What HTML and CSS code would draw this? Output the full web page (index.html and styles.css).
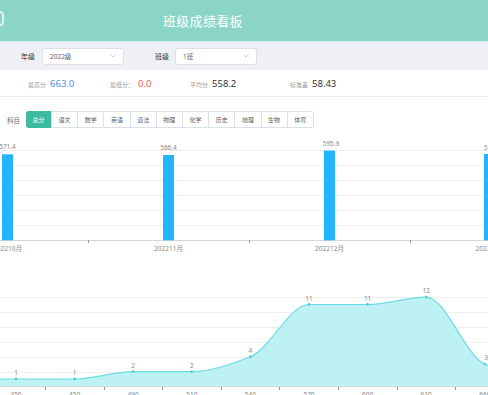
FILE: index.html
```html
<!DOCTYPE html>
<html lang="zh-CN">
<head>
    <meta charset="UTF-8">
    <meta name="viewport" content="width=device-width, initial-scale=1.0">
    <title>班级成绩看板</title>
    <link rel="stylesheet" href="styles.css">
</head>
<body>
    <!-- Header -->
    <div class="header">
        <span class="logo"></span>
        <h1 class="title">班级成绩看板</h1>
    </div>

    <!-- Filters -->
    <div class="filters">
        <label class="filter-label grade-label">年级</label>
        <div class="select">
            <span>2022级</span>
            <svg class="chevron" width="6" height="4" viewBox="0 0 6 4"><path d="M0.5 0.5 L3 3 L5.5 0.5" fill="none" stroke="#c0c4cc" stroke-width="0.8"/></svg>
        </div>
        <label class="filter-label class-label">班级</label>
        <div class="select">
            <span>1班</span>
            <svg class="chevron" width="6" height="4" viewBox="0 0 6 4"><path d="M0.5 0.5 L3 3 L5.5 0.5" fill="none" stroke="#c0c4cc" stroke-width="0.8"/></svg>
        </div>
    </div>

    <!-- Stats -->
    <div class="stats">
        <div class="stat stat-max"><span class="stat-label">最高分</span><span class="stat-value blue">663.0</span></div>
        <div class="stat stat-min"><span class="stat-label">最低分：</span><span class="stat-value red">0.0</span></div>
        <div class="stat stat-avg"><span class="stat-label">平均分</span><span class="stat-value">558.2</span></div>
        <div class="stat"><span class="stat-label">标准差</span><span class="stat-value">58.43</span></div>
    </div>

    <div class="card">
        <!-- Subject tabs -->
        <div class="tabs">
            <span class="tabs-label">科目</span>
            <div class="tab-group">
                <span class="tab active">总分</span>
                <span class="tab">语文</span>
                <span class="tab">数学</span>
                <span class="tab">英语</span>
                <span class="tab">道法</span>
                <span class="tab">物理</span>
                <span class="tab">化学</span>
                <span class="tab">历史</span>
                <span class="tab">地理</span>
                <span class="tab">生物</span>
                <span class="tab">体育</span>
            </div>
        </div>

        <!-- Monthly total bar chart -->
        <svg class="chart bar-chart" width="488" height="120" viewBox="0 0 488 120">
            <g stroke="#eeeeee" stroke-width="1">
                <line x1="0" y1="15.5" x2="488" y2="15.5"/>
                <line x1="0" y1="30.5" x2="488" y2="30.5"/>
                <line x1="0" y1="45.5" x2="488" y2="45.5"/>
                <line x1="0" y1="60.5" x2="488" y2="60.5"/>
                <line x1="0" y1="75.5" x2="488" y2="75.5"/>
                <line x1="0" y1="90.5" x2="488" y2="90.5"/>
            </g>
            <line x1="0" y1="105.5" x2="488" y2="105.5" stroke="#d6d6d6"/>
            <g stroke="#999">
                <line x1="88.5" y1="105" x2="88.5" y2="108"/>
                <line x1="249.5" y1="105" x2="249.5" y2="108"/>
                <line x1="410.5" y1="105" x2="410.5" y2="108"/>
            </g>
            <g fill="#22b5fb">
                <rect x="2" y="19.3" width="11" height="86"/>
                <rect x="163" y="20" width="11" height="85.3"/>
                <rect x="324" y="15.6" width="11" height="89.7"/>
                <rect x="484" y="19" width="11" height="86.3"/>
            </g>
            <g class="bar-labels" text-anchor="middle">
                <text x="7.5" y="14">571.4</text>
                <text x="168.5" y="15">566.4</text>
                <text x="331" y="11">595.9</text>
                <text x="492" y="15">571.0</text>
            </g>
            <g class="axis-labels" text-anchor="middle">
                <text x="7.5" y="116">202210月</text>
                <text x="168.5" y="116">202211月</text>
                <text x="329.5" y="116">202212月</text>
                <text x="490" y="116">202301月</text>
            </g>
        </svg>

        <!-- Score distribution area chart -->
        <svg class="chart area-chart" width="488" height="115" viewBox="0 0 488 115">
            <g stroke="#eeeeee" stroke-width="1">
                <line x1="0" y1="17.5" x2="488" y2="17.5"/>
                <line x1="0" y1="32.5" x2="488" y2="32.5"/>
                <line x1="0" y1="47.5" x2="488" y2="47.5"/>
                <line x1="0" y1="62.5" x2="488" y2="62.5"/>
                <line x1="0" y1="77.5" x2="488" y2="77.5"/>
                <line x1="0" y1="92.5" x2="488" y2="92.5"/>
            </g>
            <path class="area" d="M-10 99 L16 99 C35.53 99 55.07 99 74.6 99 C94.13 99 113.67 91.6 133.2 91.6 C152.73 91.6 172.27 91.6 191.8 91.6 C211.33 91.6 230.87 84.41 250.4 76.7 C269.93 68.99 289.47 24.5 309 24.5 C328.53 24.5 348.07 24.5 367.6 24.5 C387.13 24.5 406.67 17.1 426.2 17.1 C445.73 17.1 465.27 76 484.8 84.1 C504.33 92.2 523.87 99 543.4 99 L543.4 107 L-10 107 Z"/>
            <path class="line" d="M-10 99 L16 99 C35.53 99 55.07 99 74.6 99 C94.13 99 113.67 91.6 133.2 91.6 C152.73 91.6 172.27 91.6 191.8 91.6 C211.33 91.6 230.87 84.41 250.4 76.7 C269.93 68.99 289.47 24.5 309 24.5 C328.53 24.5 348.07 24.5 367.6 24.5 C387.13 24.5 406.67 17.1 426.2 17.1 C445.73 17.1 465.27 76 484.8 84.1 C504.33 92.2 523.87 99 543.4 99"/>
            <line x1="0" y1="106.5" x2="488" y2="106.5" stroke="#cfd8dc"/>
            <g stroke="#999">
                <line x1="45.5" y1="107" x2="45.5" y2="110"/>
                <line x1="104.5" y1="107" x2="104.5" y2="110"/>
                <line x1="162.5" y1="107" x2="162.5" y2="110"/>
                <line x1="221.5" y1="107" x2="221.5" y2="110"/>
                <line x1="279.5" y1="107" x2="279.5" y2="110"/>
                <line x1="338.5" y1="107" x2="338.5" y2="110"/>
                <line x1="397.5" y1="107" x2="397.5" y2="110"/>
                <line x1="455.5" y1="107" x2="455.5" y2="110"/>
            </g>
            <g fill="#4fcfd6">
                <circle cx="16" cy="99" r="1.4"/>
                <circle cx="74.6" cy="99" r="1.4"/>
                <circle cx="133.2" cy="91.6" r="1.4"/>
                <circle cx="191.8" cy="91.6" r="1.4"/>
                <circle cx="250.4" cy="76.7" r="1.4"/>
                <circle cx="309" cy="24.5" r="1.4"/>
                <circle cx="367.6" cy="24.5" r="1.4"/>
                <circle cx="426.2" cy="17.1" r="1.4"/>
                <circle cx="484.8" cy="84.1" r="1.4"/>
            </g>
            <g class="point-labels" text-anchor="middle">
                <text x="16" y="95">1</text>
                <text x="74.6" y="95">1</text>
                <text x="133.2" y="87.5">2</text>
                <text x="191.8" y="87.5">2</text>
                <text x="250.4" y="72.5">4</text>
                <text x="309" y="20.5">11</text>
                <text x="367.6" y="20.5">11</text>
                <text x="426.2" y="13">12</text>
                <text x="486" y="80">3</text>
            </g>
            <g class="axis-labels" text-anchor="middle">
                <text x="16" y="117">350</text>
                <text x="74.6" y="117">450</text>
                <text x="133.2" y="117">490</text>
                <text x="191.8" y="117">510</text>
                <text x="250.4" y="117">540</text>
                <text x="309" y="117">570</text>
                <text x="367.6" y="117">600</text>
                <text x="426.2" y="117">630</text>
                <text x="484.8" y="117">660</text>
            </g>
        </svg>
    </div>
</body>
</html>
```

FILE: styles.css
```css
/* General Body Styling */
body {
    margin: 0;
    width: 488px;
    height: 395px;
    overflow: hidden;
    font-family: "Noto Sans", "Noto Sans CJK SC", sans-serif;
    background: #fff;
    color: #333;
}

/* Header */
.header {
    height: 41px;
    background: #8bd5c8;
    border-bottom: 1px solid #c6ebe4;
    display: flex;
    align-items: center;
    position: relative;
}

.logo {
    position: absolute;
    left: -6px;
    top: 11px;
    width: 10px;
    height: 15px;
    border: 2px solid rgba(255, 255, 255, 0.7);
    border-radius: 4px;
    box-sizing: border-box;
}

.title {
    margin: 0 0 0 163px;
    font-size: 13px;
    font-weight: normal;
    color: #fff;
    letter-spacing: 0.3px;
}

/* Filters */
.filters {
    height: 28px;
    background: #eef0f5;
    display: flex;
    align-items: center;
}

.filter-label {
    font-size: 7px;
    color: #333;
    margin-right: 7px;
}

.grade-label {
    margin-left: 21px;
}

.class-label {
    margin-left: 31px;
    margin-right: 6px;
}

.select {
    width: 82px;
    height: 17px;
    box-sizing: border-box;
    background: #fff;
    border: 1px solid #dcdfe6;
    border-radius: 3px;
    display: flex;
    align-items: center;
    justify-content: space-between;
    padding: 0 7px 0 7px;
    font-size: 6.5px;
    color: #606266;
}

/* Stats */
.stats {
    height: 27px;
    display: flex;
    align-items: center;
    padding-left: 28px;
    border-bottom: 1px solid #e9ebf0;
    box-sizing: border-box;
}

.stat {
    display: flex;
    align-items: baseline;
}

.stat-max {
    width: 82px;
}

.stat-min {
    width: 80px;
}

.stat-avg {
    width: 100px;
}

.stat-label {
    font-size: 6px;
    color: #999;
    margin-right: 4px;
}

.stat-value {
    font-size: 9.5px;
    color: #333;
}

.stat-value.blue {
    color: #4d8ef0;
}

.stat-value.red {
    color: #f05656;
}

/* Card */
.card {
    margin-top: 11px;
    padding-top: 3px;
    background: #fff;
}

.tabs {
    display: flex;
    align-items: center;
    height: 17px;
}

.tabs-label {
    font-size: 6.5px;
    color: #666;
    margin: 0 6px 0 7px;
}

.tab-group {
    display: flex;
    border: 1px solid #dcdfe6;
    border-radius: 3px;
    height: 17px;
    box-sizing: border-box;
}

.tab {
    width: 26.2px;
    display: flex;
    align-items: center;
    justify-content: center;
    font-size: 6px;
    color: #606266;
    border-left: 1px solid #dcdfe6;
    box-sizing: border-box;
}

.tab:first-child {
    border-left: none;
}

.tab.active {
    background: #3dbb9f;
    color: #fff;
    margin: -1px 0 -1px -1px;
    width: 25px;
    border-radius: 3px 0 0 3px;
}

/* Charts */
.chart {
    display: block;
    overflow: hidden;
}

.bar-chart {
    margin-top: 7px;
}

.area-chart {
    margin-top: 25px;
}

.chart text {
    font-family: "Noto Sans", "Noto Sans CJK SC", sans-serif;
    font-size: 6.5px;
    fill: #888;
}

.area {
    fill: #b3eef2;
    fill-opacity: 0.85;
}

.line {
    fill: none;
    stroke: #6cdde4;
    stroke-width: 1.2;
}
```
